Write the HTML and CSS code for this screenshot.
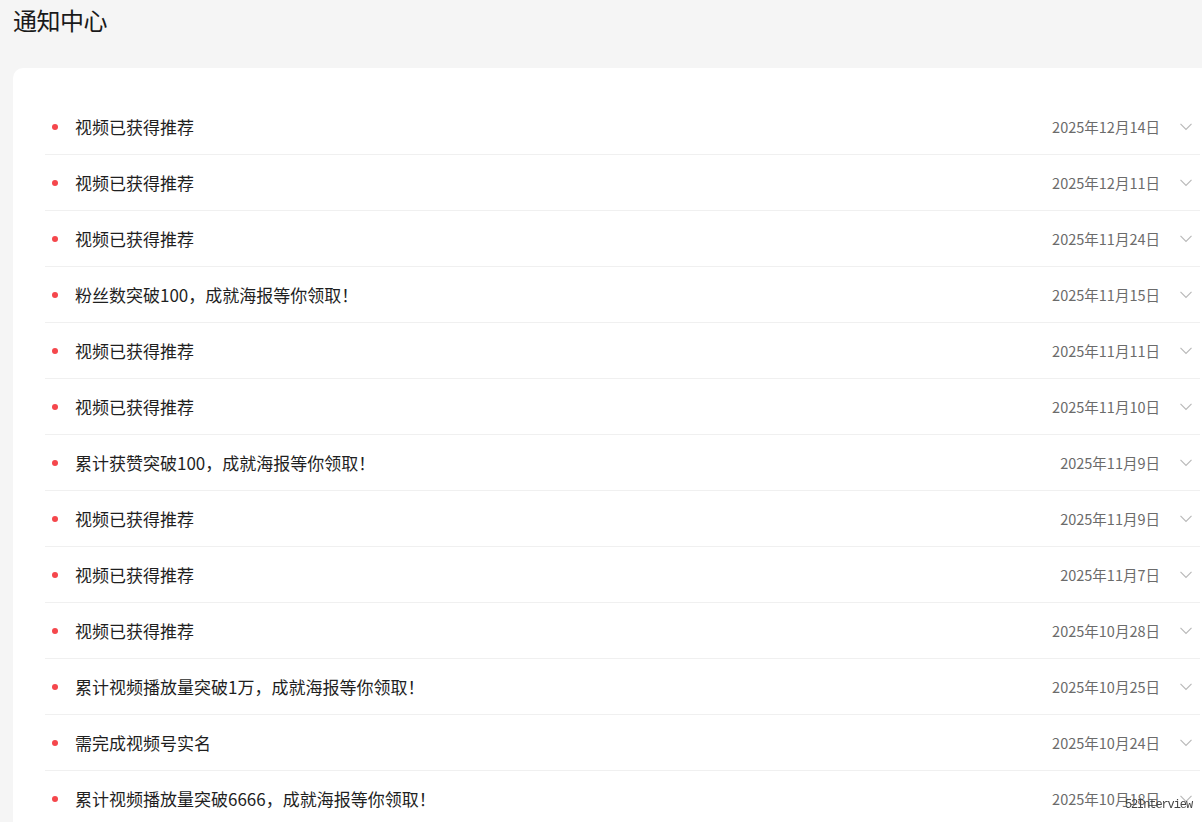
FILE: index.html
```html
<!DOCTYPE html>
<html lang="zh-CN">
<head>
<meta charset="utf-8">
<title>通知中心</title>
<link rel="stylesheet" href="styles.css">
</head>
<body>
<div class="page">
  <h1 class="title">通知中心</h1>
  <div class="card">
    <ul class="list">
      <li class="row"><span class="dot"></span><span class="text">视频已获得推荐</span><span class="date">2025年12月14日</span><svg class="chev" viewBox="0 0 12 8"><path d="M0.5 0.8 L6 6.5 L11.5 0.8"/></svg></li>
      <li class="row"><span class="dot"></span><span class="text">视频已获得推荐</span><span class="date">2025年12月11日</span><svg class="chev" viewBox="0 0 12 8"><path d="M0.5 0.8 L6 6.5 L11.5 0.8"/></svg></li>
      <li class="row"><span class="dot"></span><span class="text">视频已获得推荐</span><span class="date">2025年11月24日</span><svg class="chev" viewBox="0 0 12 8"><path d="M0.5 0.8 L6 6.5 L11.5 0.8"/></svg></li>
      <li class="row"><span class="dot"></span><span class="text">粉丝数突破100，成就海报等你领取！</span><span class="date">2025年11月15日</span><svg class="chev" viewBox="0 0 12 8"><path d="M0.5 0.8 L6 6.5 L11.5 0.8"/></svg></li>
      <li class="row"><span class="dot"></span><span class="text">视频已获得推荐</span><span class="date">2025年11月11日</span><svg class="chev" viewBox="0 0 12 8"><path d="M0.5 0.8 L6 6.5 L11.5 0.8"/></svg></li>
      <li class="row"><span class="dot"></span><span class="text">视频已获得推荐</span><span class="date">2025年11月10日</span><svg class="chev" viewBox="0 0 12 8"><path d="M0.5 0.8 L6 6.5 L11.5 0.8"/></svg></li>
      <li class="row"><span class="dot"></span><span class="text">累计获赞突破100，成就海报等你领取！</span><span class="date">2025年11月9日</span><svg class="chev" viewBox="0 0 12 8"><path d="M0.5 0.8 L6 6.5 L11.5 0.8"/></svg></li>
      <li class="row"><span class="dot"></span><span class="text">视频已获得推荐</span><span class="date">2025年11月9日</span><svg class="chev" viewBox="0 0 12 8"><path d="M0.5 0.8 L6 6.5 L11.5 0.8"/></svg></li>
      <li class="row"><span class="dot"></span><span class="text">视频已获得推荐</span><span class="date">2025年11月7日</span><svg class="chev" viewBox="0 0 12 8"><path d="M0.5 0.8 L6 6.5 L11.5 0.8"/></svg></li>
      <li class="row"><span class="dot"></span><span class="text">视频已获得推荐</span><span class="date">2025年10月28日</span><svg class="chev" viewBox="0 0 12 8"><path d="M0.5 0.8 L6 6.5 L11.5 0.8"/></svg></li>
      <li class="row"><span class="dot"></span><span class="text">累计视频播放量突破1万，成就海报等你领取！</span><span class="date">2025年10月25日</span><svg class="chev" viewBox="0 0 12 8"><path d="M0.5 0.8 L6 6.5 L11.5 0.8"/></svg></li>
      <li class="row"><span class="dot"></span><span class="text">需完成视频号实名</span><span class="date">2025年10月24日</span><svg class="chev" viewBox="0 0 12 8"><path d="M0.5 0.8 L6 6.5 L11.5 0.8"/></svg></li>
      <li class="row"><span class="dot"></span><span class="text">累计视频播放量突破6666，成就海报等你领取！</span><span class="date">2025年10月18日</span><svg class="chev" viewBox="0 0 12 8"><path d="M0.5 0.8 L6 6.5 L11.5 0.8"/></svg></li>
    </ul>
  </div>
</div>
<div class="watermark">52Interview</div>
</body>
</html>
```
FILE: styles.css
```css
html, body {
  margin: 0;
  padding: 0;
  height: 100%;
  overflow: hidden;
  background: #f5f5f5;
}
body {
  font-family: "Noto Sans CJK SC", "Noto Sans", sans-serif;
  color: #1f1f1f;
}
.page {
  width: 1219px;
  padding: 0 0 0 13px;
}
.title {
  margin: 0;
  padding-top: 4px;
  height: 64px;
  font-size: 24px;
  line-height: 32px;
  font-weight: 400;
  color: #1a1a1a;
  letter-spacing: -0.5px;
}
.card {
  background: #fff;
  border-radius: 10px;
  padding: 31px 32px 40px 32px;
}
.list {
  list-style: none;
  margin: 0;
  padding: 0;
}
.row {
  display: flex;
  align-items: center;
  height: 56px;
  box-sizing: border-box;
  border-bottom: 1px solid #f0f0f0;
  padding: 0 8px 0 7px;
}
.dot {
  width: 6px;
  height: 6px;
  border-radius: 50%;
  background: #f5474c;
  flex: none;
  margin-right: 17px;
}
.text {
  flex: 1;
  font-size: 17px;
  color: #1f1f1f;
}
.date {
  font-size: 14.5px;
  color: #6b6b6b;
  margin-right: 20px;
}
.chev {
  width: 12px;
  height: 8px;
  flex: none;
  margin-top: 1px;
}
.chev path {
  fill: none;
  stroke: #b8b8b8;
  stroke-width: 1.1;
}
.watermark {
  position: fixed;
  right: 10px;
  bottom: 10px;
  font-family: "Liberation Mono", "DejaVu Sans Mono", monospace;
  font-size: 12px;
  line-height: 14px;
  color: #444;
  letter-spacing: -1.1px;
}
```
